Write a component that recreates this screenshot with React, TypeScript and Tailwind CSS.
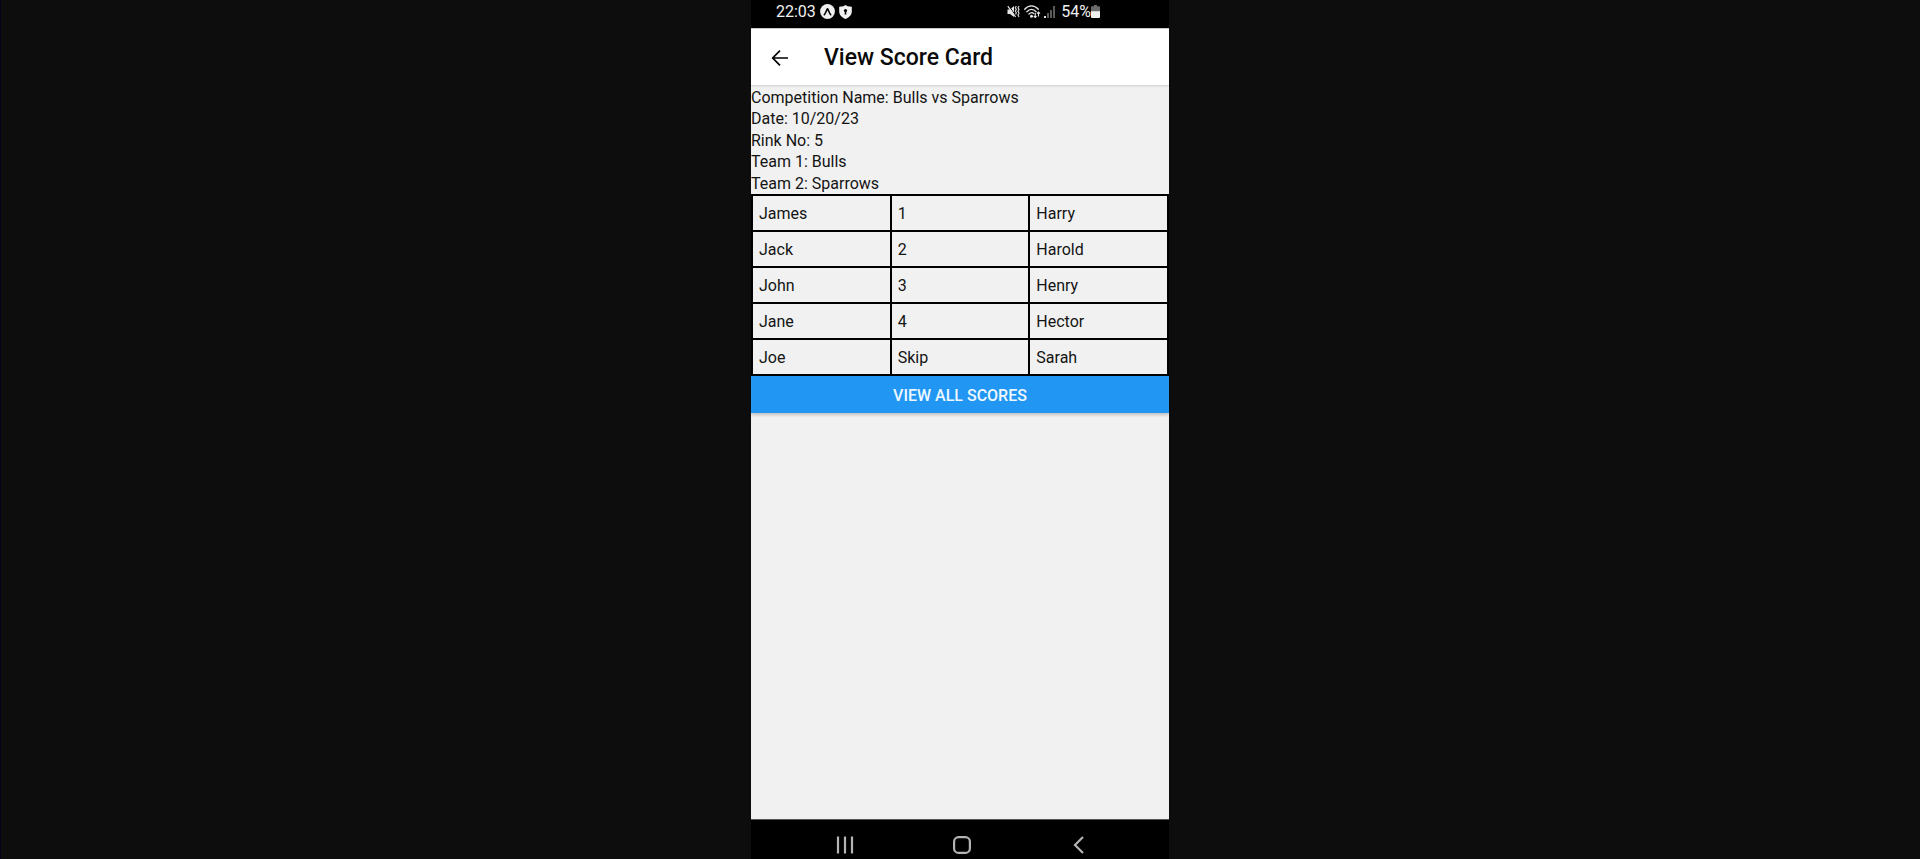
const details = [
  'Competition Name: Bulls vs Sparrows',
  'Date: 10/20/23',
  'Rink No: 5',
  'Team 1: Bulls',
  'Team 2: Sparrows',
];

const rows = [
  ['James', '1', 'Harry'],
  ['Jack', '2', 'Harold'],
  ['John', '3', 'Henry'],
  ['Jane', '4', 'Hector'],
  ['Joe', 'Skip', 'Sarah'],
];

function StatusBar() {
  return (
    <div className="flex h-7 items-start justify-between bg-black pr-[69px] pl-[25px] text-[#f0f0f0]">
      <div className="flex h-[23px] items-center gap-1">
        <span className="text-base leading-6">22:03</span>
        <svg className="size-[15px]" viewBox="0 0 15 15" aria-hidden="true">
          <circle cx="7.5" cy="7.5" r="7.4" fill="#f0f0f0" />
          <path d="M4.3 10.7C5.6 9.2 6.3 6.6 7.5 4.8 8.7 6.6 9.4 9.2 10.7 10.7" fill="none" stroke="#000" strokeWidth="1.6" strokeLinecap="round" strokeLinejoin="round" />
        </svg>
        <svg className="h-[14px] w-[13px]" viewBox="0 0 13 14" aria-hidden="true">
          <path d="M6.5 0 8.6 1.3 12.8 1.8V6.5C12.8 10.2 9.8 12.6 6.5 14 3.2 12.6.2 10.2.2 6.5V1.8L4.4 1.3Z" fill="#f0f0f0" />
          <circle cx="6.5" cy="5.6" r="1.6" fill="#000" />
          <path d="M5.9 6h1.2l.3 3.4H5.6Z" fill="#000" />
        </svg>
      </div>
      <div className="flex h-[23px] items-center">
        <svg className="h-[13px] w-[13px]" viewBox="0 0 13 13" aria-hidden="true">
          <path d="M.5 4.500H3L7 1V12L3 9H.5Z" fill="#e6e6e6" />
          <path d="M1.800.8 9 11" stroke="#000" strokeWidth="1" />
          <path d="M.8 1.200 8.600 12" stroke="#e6e6e6" strokeWidth="1.2" />
          <path d="M9.300 1 8.300 2.700 9.300 4.400 8.300 6.100 9.300 7.800 8.600 9.500M12 1 11 2.800 12 4.600 11 6.400 12 8.200 11 10 12 12" fill="none" stroke="#d4d4d4" strokeWidth="1.2" />
        </svg>
        <svg className="ml-1 h-[13px] w-[17px]" viewBox="0 0 17 13" aria-hidden="true">
          <path d="M.7 4.3C4.6-.2 10.4-.2 14.3 4.3M2.9 6.7C5.6 3.6 9.4 3.6 12.1 6.7M5 9C6.6 7.4 8.4 7.4 9.8 8.6" fill="none" stroke="#e6e6e6" strokeWidth="1.3" strokeLinecap="round" />
          <circle cx="7.5" cy="11.2" r="1.5" fill="#e6e6e6" />
          <path d="M11.3 8v4.5M9.8 11 11.3 12.6 12.6 11M14.5 11.5V7M13 8.6 14.5 7 16 8.6" fill="none" stroke="#e6e6e6" strokeWidth="1.1" />
        </svg>
        <svg className="ml-[3px] h-[12px] w-[11px]" viewBox="0 0 11 12" aria-hidden="true">
          <path d="M0 10h2v2H0Z" fill="#e0e0e0" />
          <path d="M3 7h2v5H3ZM6 4h2v8H6ZM9 0h2v12H9Z" fill="#5a5a5a" />
        </svg>
        <span className="ml-1.5 text-base leading-6">54%</span>
        <svg className="h-[13px] w-[9px]" viewBox="0 0 9 13" aria-hidden="true">
          <path d="M3 0h3v1.3H8a1 1 0 0 1 1 1V7H0V2.300a1 1 0 0 1 1-1H3Z" fill="#6b6b6b" />
          <path d="M0 6.300h9V12a1 1 0 0 1-1 1H1a1 1 0 0 1-1-1Z" fill="#f0f0f0" />
        </svg>
      </div>
    </div>
  );
}

function AppHeader() {
  return (
    <header className="relative flex h-[57px] items-center border-t border-[#c8c8c8] bg-white pt-px pl-5 shadow-[0_1px_2px_rgba(0,0,0,0.15)]">
      <button type="button" aria-label="Back" className="text-black">
        <svg className="size-[18px]" viewBox="0 0 18 18" fill="none" stroke="currentColor" strokeWidth="1.7" aria-hidden="true">
          <path d="M17 9H2M9 1.700 1.700 9 9 16.300" />
        </svg>
      </button>
      <h1 className="ml-[35px] text-[23px] leading-7 font-medium text-[#0a0a0a]">View Score Card</h1>
    </header>
  );
}

function NavBar() {
  return (
    <nav className="flex h-10 items-start justify-between border-t border-[#555] bg-black pt-4 pr-[81px] pl-[85px] text-[#b4b4b4]">
      <button type="button" aria-label="Recent apps">
        <svg className="size-[18px]" viewBox="0 0 18 18" fill="none" stroke="currentColor" strokeWidth="2.2" aria-hidden="true">
          <path d="M2 .5v17M9 .5v17M16 .5v17" />
        </svg>
      </button>
      <button type="button" aria-label="Home">
        <svg className="size-[18px]" viewBox="0 0 18 18" fill="none" stroke="currentColor" strokeWidth="2.200" aria-hidden="true">
          <rect x="1.100" y="1.100" width="15.800" height="15.800" rx="4.500" />
        </svg>
      </button>
      <button type="button" aria-label="Back to previous screen">
        <svg className="size-[18px]" viewBox="0 0 18 18" fill="none" stroke="currentColor" strokeWidth="2.200" aria-hidden="true">
          <path d="M13 1 5 9l8 8" />
        </svg>
      </button>
    </nav>
  );
}

export default function App() {
  return (
    <div className="flex min-h-screen justify-center border-x border-r-[#0d0d0d] border-l-[#02041a] bg-[#0d0d0d] font-['Roboto',sans-serif]">
      <div className="flex w-full max-w-[418px] flex-col bg-[#f1f1f1] text-[#141414]">
        <StatusBar />
        <AppHeader />
        <main className="flex-1">
          <div className="grid h-[109px] grid-rows-5 pt-0.5 text-base leading-[22px]">
            {details.map((line) => (
              <p key={line}>{line}</p>
            ))}
          </div>
          <table className="w-full table-fixed border-collapse border-2 border-black text-base leading-5">
            <tbody>
              {rows.map((row) => (
                <tr key={row[0]} className="h-9">
                  {row.map((cell) => (
                    <td key={cell} className="border-2 border-black px-1.5 pt-0.5 pb-0">
                      {cell}
                    </td>
                  ))}
                </tr>
              ))}
            </tbody>
          </table>
          <button
            type="button"
            className="flex h-[37px] w-full items-center justify-center bg-[#2196f3] pt-0.5 text-base font-medium text-[#eef8ff] uppercase shadow-[0_2px_3px_rgba(0,0,0,0.2)]"
          >
            View all scores
          </button>
        </main>
        <NavBar />
      </div>
    </div>
  );
}
